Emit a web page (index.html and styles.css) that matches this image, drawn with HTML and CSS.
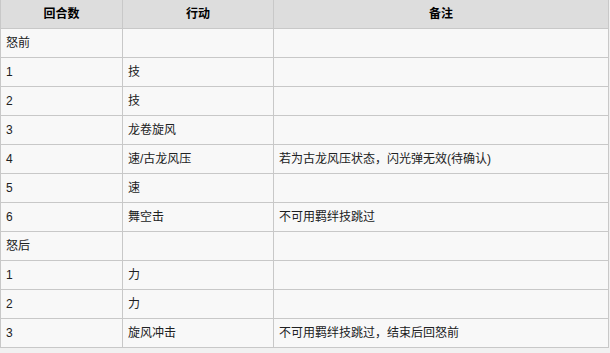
FILE: index.html
```html
<!DOCTYPE html>
<html lang="zh">
<head>
<meta charset="utf-8">
<link rel="stylesheet" href="styles.css">
</head>
<body>
<table class="wt">
<colgroup><col class="c1"><col class="c2"><col class="c3"></colgroup>
<thead>
<tr><th>回合数</th><th>行动</th><th>备注</th></tr>
</thead>
<tbody>
<tr><td>怒前</td><td></td><td></td></tr>
<tr><td>1</td><td>技</td><td></td></tr>
<tr><td>2</td><td>技</td><td></td></tr>
<tr><td>3</td><td>龙卷旋风</td><td></td></tr>
<tr><td>4</td><td>速/古龙风压</td><td>若为古龙风压状态，闪光弹无效(待确认)</td></tr>
<tr><td>5</td><td>速</td><td></td></tr>
<tr><td>6</td><td>舞空击</td><td>不可用羁绊技跳过</td></tr>
<tr><td>怒后</td><td></td><td></td></tr>
<tr><td>1</td><td>力</td><td></td></tr>
<tr><td>2</td><td>力</td><td></td></tr>
<tr><td>3</td><td>旋风冲击</td><td>不可用羁绊技跳过，结束后回怒前</td></tr>
</tbody>
</table>
</body>
</html>
```
FILE: styles.css
```css
html, body {
  margin: 0;
  padding: 0;
  background: #f1f1f1;
}
.wt {
  border-collapse: collapse;
  width: 608px;
  margin-top: -1px;
  table-layout: fixed;
  font-family: "Liberation Sans", "Noto Sans CJK SC", sans-serif;
  font-size: 12px;
  color: #202122;
  background: #f8f8f8;
}
.c1 { width: 122px; }
.c2 { width: 151px; }
.c3 { width: 335px; }
.wt th, .wt td {
  border: 1px solid #c8c8c8;
  height: 29px;
  padding: 0 5px;
  box-sizing: border-box;
  line-height: 16px;
  text-align: left;
  vertical-align: middle;
}
.wt th {
  background: #dddddd;
  font-weight: bold;
  text-align: center;
  color: #000;
}
```
